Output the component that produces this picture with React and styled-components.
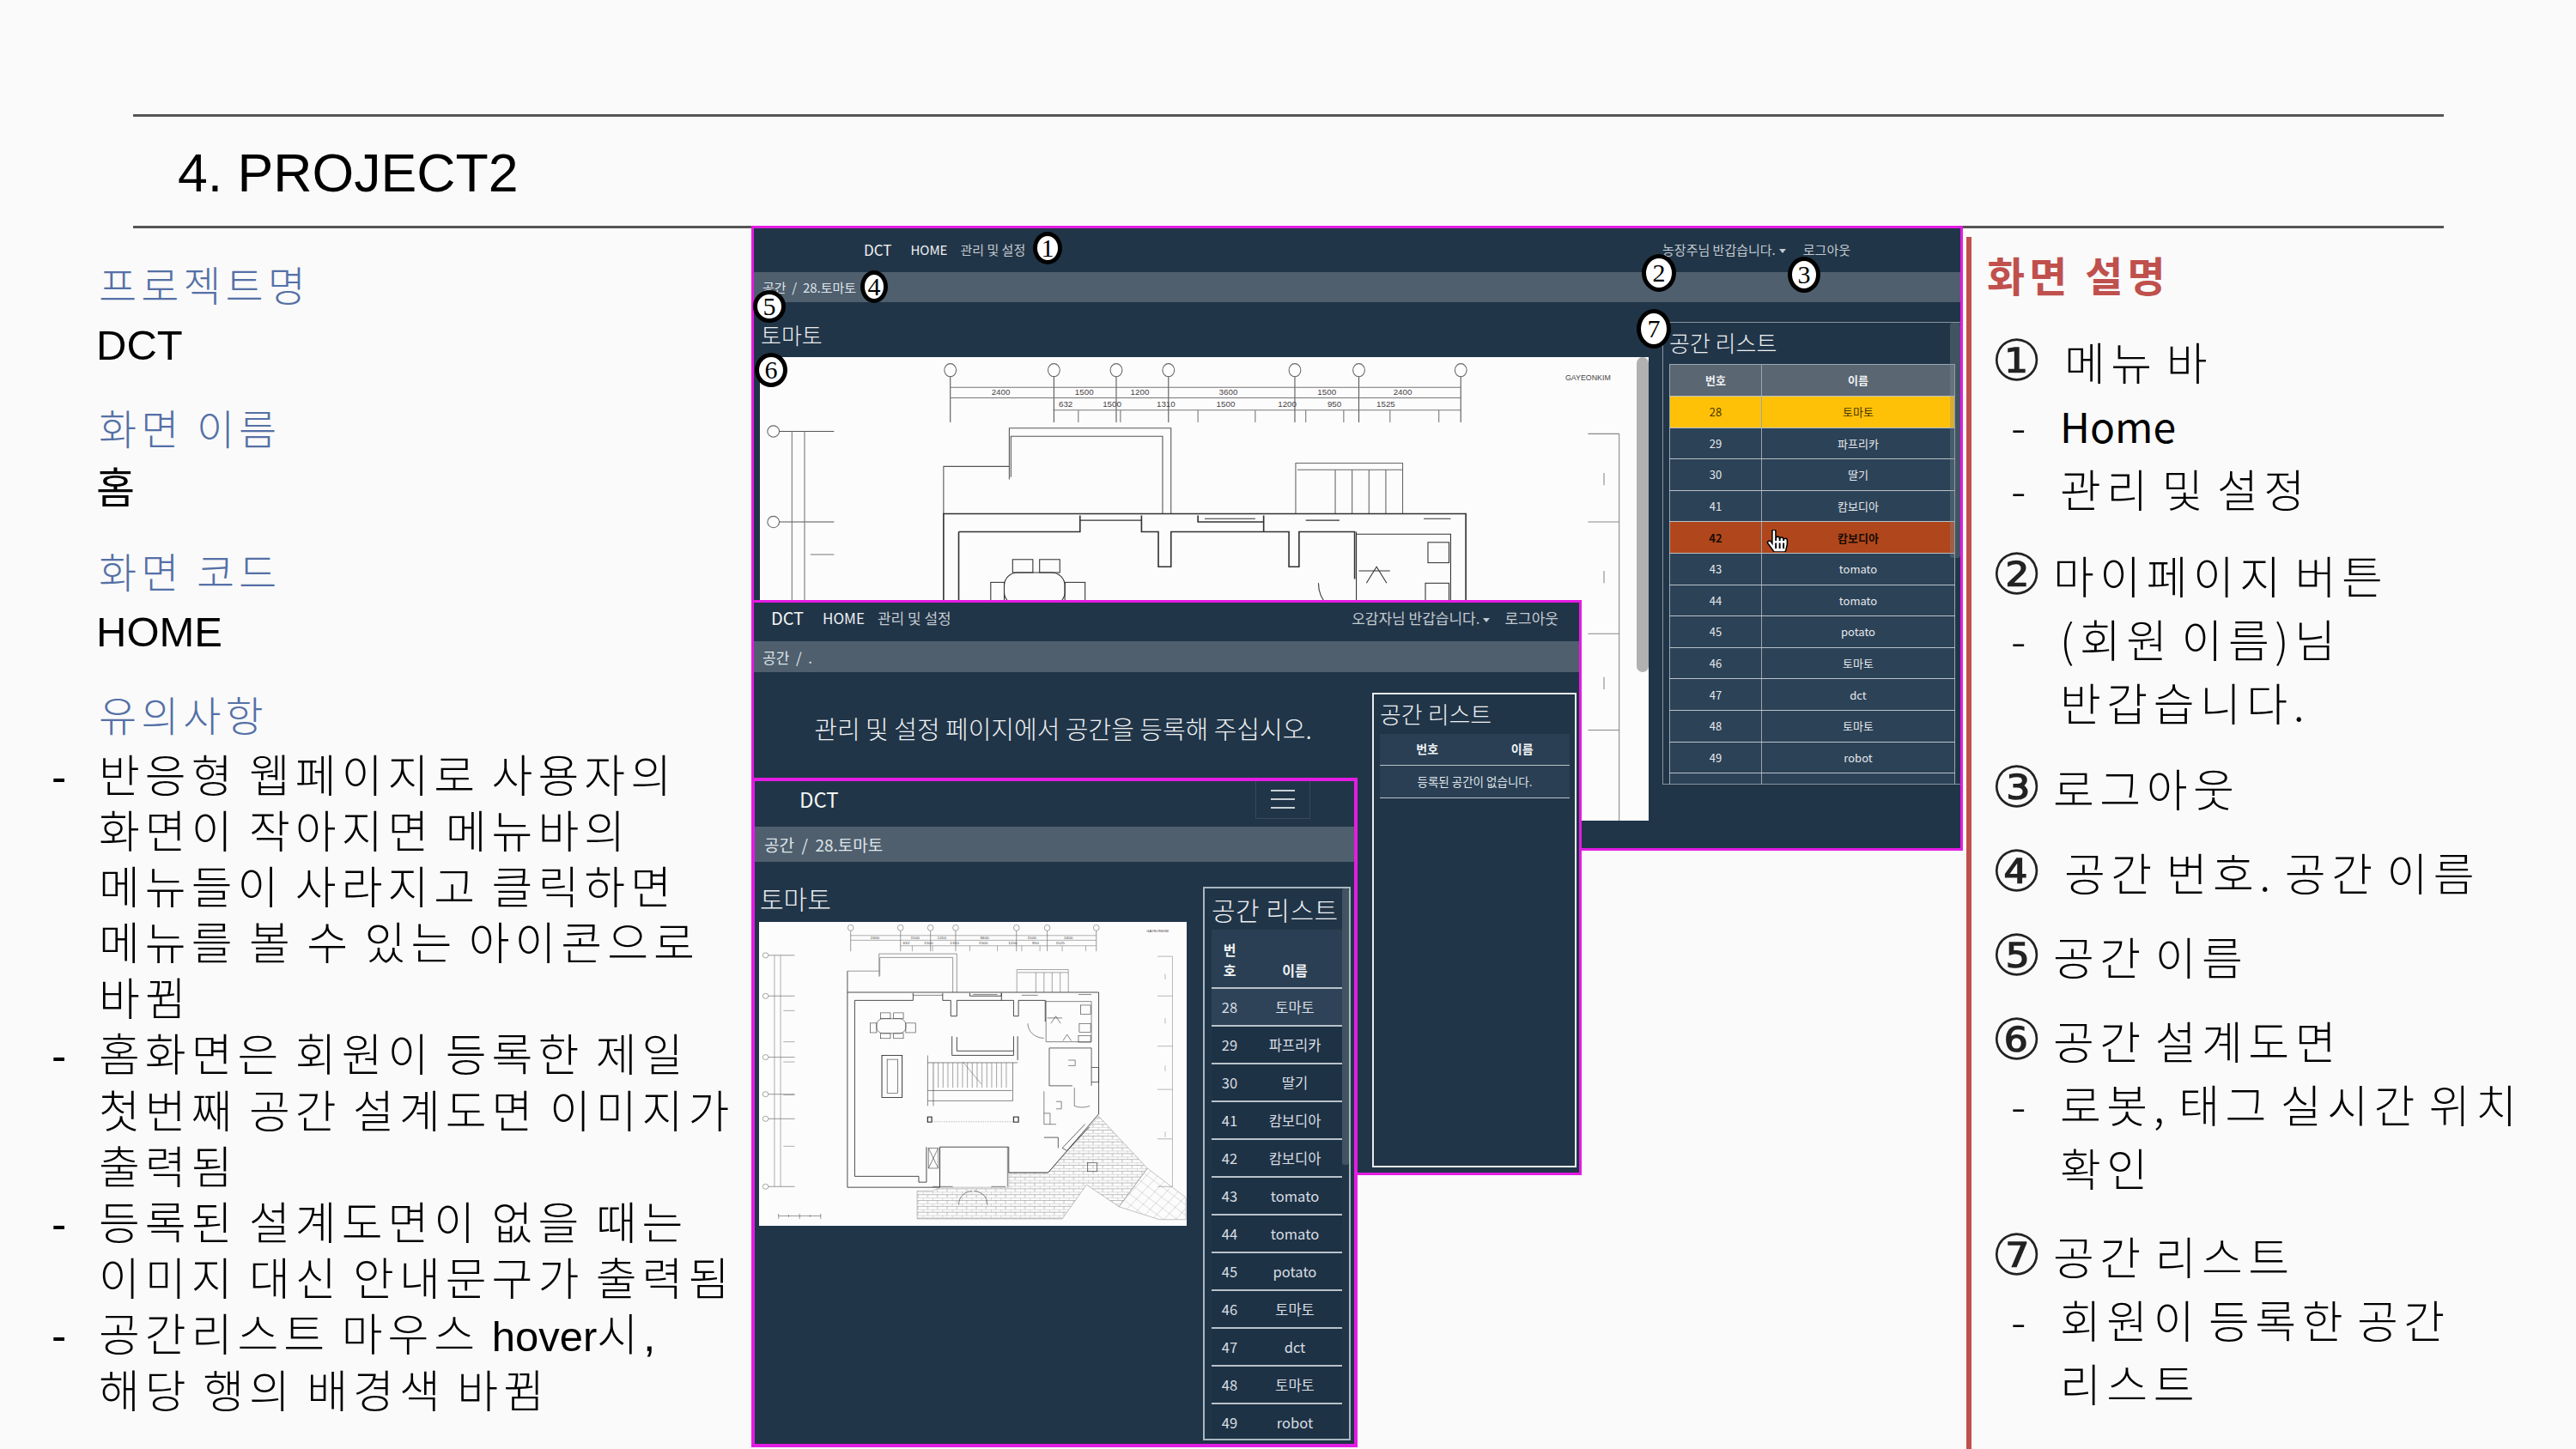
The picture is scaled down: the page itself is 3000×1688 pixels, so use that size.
import React from 'react';
import styled, { createGlobalStyle } from 'styled-components';
import { FaHandPointer } from 'react-icons/fa';

const KR = '"Noto Sans CJK KR", sans-serif';
const MIXED = '"Liberation Sans", "Noto Sans CJK KR", sans-serif';
const DARK = '#213548';
const CRUMB = '#4f5f6e';
const MAGENTA = '#e31ce3';

const GlobalStyle = createGlobalStyle`
  html, body { margin: 0; padding: 0; background: #fafafa; }
  * { box-sizing: border-box; }
`;

const Slide = styled.div`
  position: relative;
  width: 3000px;
  height: 1688px;
  overflow: hidden;
  background: #fafafa;
  color: #000;
`;
const Header = styled.header`
  margin: 133px 154px 0 155px;
  height: 133px;
  border-top: 3px solid #555;
  border-bottom: 3px solid #555;
  display: flex;
  align-items: center;
  padding: 3px 0 0 52px;
  font: 400 62.6px ${MIXED};
`;
const Body = styled.div`
  display: grid;
  grid-template-columns: 875px 1415px 1fr;
  height: 1422px;
`;

/* left column */
const Summary = styled.section`
  padding: 31px 0 0 115px;
  position: relative;
`;
const Label = styled.div`
  font: 300 48px/66px ${KR};
  letter-spacing: 5px;
  color: #5470a6;
  white-space: nowrap;
`;
const Value = styled.div`
  font: 400 49px/72px ${MIXED};
  margin: 3px 0 26px -3px;
`;
const Notes = styled.ul`
  list-style: none;
  margin: 9px 0 0 -55px;
  padding: 0;
`;
const Note = styled.li`
  display: grid;
  grid-template-columns: 55px 1fr;
  font: 300 52px/65.1px ${MIXED};
  letter-spacing: 6px;
  word-spacing: -7px;
  white-space: nowrap;
`;
const Line = styled.div``;
const Plain = styled.span`
  letter-spacing: 0;
  font-size: 49px;
`;

/* right column */
const Explain = styled.aside`
  margin: 10px 0 0 0;
  border-left: 6px solid #c0504d;
  padding: 7px 0 0 18px;
  height: 1412px;
  overflow: hidden;
`;
const ExplainTitle = styled.h2`
  margin: 0 0 29px;
  font: 700 48px/72px ${KR};
  letter-spacing: 5px;
  color: #c0504d;
`;
const Group = styled.div`
  margin: 0 0 ${p => p.$gap || 24}px 8px;
  font-family: ${KR};
`;
const Heading = styled.div`
  display: flex;
  align-items: center;
  font-weight: 300;
  font-size: 52px;
  line-height: 74px;
  letter-spacing: 6.5px;
  word-spacing: -8px;
  white-space: nowrap;
`;
const Circled = styled.span`
  display: inline-block;
  width: ${p => p.$wide ? 85 : 72}px;
  font-family: "DejaVu Sans", sans-serif;
  font-weight: 200;
  font-size: 66px;
  line-height: 70px;
  letter-spacing: 0;
  margin-left: -3px;
  color: #222;
`;
const SubItem = styled.div`
  display: grid;
  grid-template-columns: 77px 1fr;
  font-weight: 300;
  font-size: 52px;
  line-height: 74px;
  letter-spacing: 6.5px;
  word-spacing: -8px;
  white-space: nowrap;
`;
const SubDash = styled.span`
  padding-left: 20px;
`;
const SubLatin = styled.span`
  letter-spacing: 0;
  font-size: 48px;
  font-weight: 400;
`;

/* the overlapped screenshots */
const Canvas = styled.div`
  position: relative;
`;
const Frame = styled.div`
  position: absolute;
  left: 0;
  top: ${p => p.$top}px;
  width: ${p => p.$width}px;
  height: ${p => p.$height}px;
  border: ${p => p.$border}px solid ${MAGENTA};
  background: ${DARK};
  display: flex;
  flex-direction: column;
  overflow: hidden;
  color: #dfe4e8;
  font-family: ${KR};
`;
const NavBar = styled.nav`
  height: ${p => p.$height}px;
  flex: none;
  display: flex;
  align-items: center;
  padding: 0 0 ${p => p.$lift || 0}px ${p => p.$pad}px;
  font-size: ${p => p.$size}px;
  color: #c3cad0;
`;
const Brand = styled.span`
  font-size: ${p => p.$size}px;
  color: #f2f4f5;
  margin-right: ${p => p.$gap}px;
`;
const NavLink = styled.span`
  margin-right: ${p => p.$gap}px;
  color: ${p => p.$active ? '#eef1f3' : '#c3cad0'};
`;
const NavRight = styled.div`
  margin-left: auto;
  margin-right: ${p => p.$right}px;
  display: flex;
  align-items: center;
  gap: ${p => p.$gap}px;
`;
const Caret = styled.i`
  display: inline-block;
  margin-left: 4px;
  vertical-align: middle;
  border-top: 5px solid #c3cad0;
  border-left: 4px solid transparent;
  border-right: 4px solid transparent;
`;
const Toggler = styled.div`
  margin-left: auto;
  margin-right: 51px;
  width: 64px;
  height: 46px;
  border: 1px solid rgba(255, 255, 255, 0.1);
  display: flex;
  align-items: center;
  justify-content: center;
`;
const Crumb = styled.div`
  height: ${p => p.$height}px;
  flex: none;
  background: ${CRUMB};
  display: flex;
  align-items: center;
  padding-left: ${p => p.$pad}px;
  font-size: ${p => p.$size}px;
  color: #dfe4e8;
`;
const Columns = styled.div`
  flex: 1;
  min-height: 0;
  display: grid;
  grid-template-columns: ${p => p.$cols};
  column-gap: ${p => p.$gap}px;
  padding: ${p => p.$padding};
`;
const Main = styled.div`
  min-width: 0;
  display: flex;
  flex-direction: column;
`;
const SpaceName = styled.div`
  font-size: ${p => p.$size}px;
  line-height: ${p => p.$line}px;
  height: 41px;
  padding-left: 1px;
  font-weight: 300;
  color: #e8ecef;
`;
const Paper = styled.div`
  position: relative;
  width: ${p => p.$width}px;
  height: ${p => p.$height}px;
  background: #fdfcfd;
  overflow: hidden;
`;
const ImageScroll = styled.div`
  position: absolute;
  top: 0;
  right: 0;
  width: 14px;
  height: 367px;
  background: #b1b1b1;
  border-radius: 7px;
`;
const Message = styled.div`
  height: 82px;
  display: flex;
  align-items: center;
  justify-content: center;
  font-size: 29px;
  font-weight: 300;
  color: #eef1f3;
  white-space: nowrap;
`;
const Panel = styled.div`
  position: relative;
  height: ${p => p.$height}px;
  padding: ${p => p.$padding};
  border: ${p => p.$line}px solid ${p => p.$color};
  border-right-width: ${p => p.$open ? 0 : p.$line}px;
  overflow: hidden;
`;
const PanelTitle = styled.h3`
  margin: 0 0 ${p => p.$after || 0}px;
  font-weight: 300;
  font-size: ${p => p.$size}px;
  line-height: ${p => p.$line}px;
  letter-spacing: ${p => p.$spacing || 0}px;
  white-space: nowrap;
  color: #eef1f3;
`;
const PanelScroll = styled.div`
  position: absolute;
  top: 0;
  right: 0;
  width: ${p => p.$width}px;
  height: ${p => p.$height}px;
  background: rgba(130, 140, 150, 0.35);
  border-radius: 3px;
`;
const Table = styled.table`
  width: ${p => p.$width}px;
  table-layout: fixed;
  border-collapse: collapse;
  text-align: center;
`;
const HeadCell = styled.th`
  width: ${p => p.$width ? `${p.$width}px` : 'auto'};
  height: ${p => p.$height}px;
  padding: 0 0 ${p => p.$padBottom || 0}px;
  font-size: ${p => p.$size}px;
  line-height: 1.5;
  font-weight: 700;
  vertical-align: ${p => p.$bottom ? 'bottom' : 'middle'};
  background: ${p => p.$bg};
  color: #eef1f3;
  border: ${p => p.$grid ? '1px solid #9aa5af' : '0'};
  border-bottom: ${p => p.$rule}px solid #b9c2c9;
`;
const Cell = styled.td`
  height: ${p => p.$height}px;
  padding: 0;
  font-size: ${p => p.$size}px;
  font-weight: ${p => p.$strong ? 700 : 400};
  background: ${p => p.$bg};
  color: ${p => p.$fg};
  border: ${p => p.$grid ? '1px solid #9aa5af' : '0'};
  border-bottom: ${p => p.$rule}px solid #b9c2c9;
`;
const Badge = styled.div`
  position: absolute;
  left: ${p => p.$x}px;
  top: ${p => p.$y}px;
  width: ${p => p.$w}px;
  height: ${p => p.$h}px;
  transform: translate(-50%, -50%);
  border: 5px solid #000;
  border-radius: 50%;
  background: #fff;
  color: #000;
  display: flex;
  align-items: center;
  justify-content: center;
  font: 400 30px "Liberation Serif", serif;
  z-index: 5;
`;
const Pointer = styled.div`
  position: absolute;
  left: 1179px;
  top: 351px;
  z-index: 1;
  line-height: 0;
`;

const ROWS = [
  [28, '토마토'], [29, '파프리카'], [30, '딸기'], [41, '캄보디아'], [42, '캄보디아'], [43, 'tomato'],
  [44, 'tomato'], [45, 'potato'], [46, '토마토'], [47, 'dct'], [48, '토마토'], [49, 'robot'],
];

const BUBBLES_X = [278, 401, 475, 537, 687, 763, 884];
const BUBBLES_Y = [219, 330, 497, 598, 665, 850];
const DIMS = [
  [338, 174, '2400'], [437, 174, '1500'], [503, 174, '1200'], [608, 174, '3600'], [725, 174, '1500'], [815, 174, '2400'],
  [415, 189, '632'], [470, 189, '1500'], [534, 189, '1310'], [605, 189, '1500'], [678, 189, '1200'], [734, 189, '950'], [795, 189, '1525'],
];

// floor plan traced by hand, coordinates are shared by both crops
const FloorPlan = ({ id, height, weight }) => (
  <svg width="100%" height="100%" viewBox={`52 128 1055 ${height}`} preserveAspectRatio="none">
    <defs>
      <pattern id={`${id}-brick`} width="24" height="16" patternUnits="userSpaceOnUse">
        <path d="M0 0H24M0 8H24M0 0V8M12 8V16" fill="none" stroke="#777" strokeWidth="1" />
      </pattern>
      <pattern id={`${id}-tile`} width="22" height="22" patternUnits="userSpaceOnUse" patternTransform="rotate(40)">
        <path d="M0 0H22M0 0V22" fill="none" stroke="#888" strokeWidth="1" />
      </pattern>
    </defs>
    <g fill="none" stroke="#333" strokeWidth={weight}>
      <polygon points="442,862 480,862 498,852 668,852 668,812 765,812 890,658 1010,800 940,905 860,845 800,938 442,938" fill={`url(#${id}-brick)`} stroke="#999" />
      <polygon points="1010,800 1105,880 1105,940 1040,940 940,905" fill={`url(#${id}-tile)`} stroke="#999" />
      {BUBBLES_X.map(x => (
        <g key={x}>
          <ellipse cx={x} cy={144} rx="7" ry="8" fill="#fff" stroke="#666" />
          <path d={`M${x} 152V208`} stroke="#555" />
        </g>
      ))}
      {BUBBLES_Y.map(y => (
        <g key={y}>
          <ellipse cx={68} cy={y} rx="7" ry="7" fill="#fff" stroke="#666" />
          <path d={`M75 ${y}H140`} stroke="#555" />
        </g>
      ))}
      <path stroke="#777" d="M278 165H884M278 178H884M400 193H884M430 193V208M480 193V208M572 193V208M640 193V208M700 193V208M745 193V208M800 193V208M858 193V208" />
      <path stroke="#777" d="M90 219V850M105 219V850M112 370H140M112 455H140M112 510H140M112 600H140M112 740H140" />
      <path stroke="#888" d="M1072 222V850M1035 222H1072M1035 330H1072M1035 467H1072M1035 585H1072M1035 720H1072M1035 850H1072M1054 270V285M1054 390V405M1054 520V535M1054 700V715" />
      <path stroke="#555" d="M270 320V262H348V215H540V320M348 262V278M350 275V225H530V320M270 262V320" />
      <path stroke="#666" d="M688 320V258H815V320M690 266H815M735 266V320M755 266V320M775 266V320M795 266V320" />
      <path strokeWidth={weight * 1.5} d="M270 320H890V652L765 812H668V742H498V852H270Z" />
      <path strokeWidth={weight * 1.5} d="M288 342V822H446V838H465V742M288 342H432V322M505 322V342H525V385H540V342H680V385H692V342H758V400M572 322V330H650V322M650 322V342" />
      <path d="M432 328H505M580 326H640M700 328H740M840 326H872" />
      <path d="M760 342V455H872V345H760M763 390H800M715 405A40 40 0 0 0 755 445M772 405L784 385L796 405M802 452L812 435L822 452" />
      <rect x="845" y="355" width="25" height="25" />
      <rect x="842" y="405" width="28" height="24" />
      <rect x="840" y="438" width="30" height="18" />
      <rect x="342" y="392" width="72" height="40" rx="16" />
      <rect x="352" y="376" width="24" height="16" />
      <rect x="384" y="376" width="24" height="16" />
      <rect x="352" y="432" width="24" height="14" />
      <rect x="384" y="432" width="24" height="14" />
      <rect x="326" y="404" width="16" height="26" />
      <rect x="414" y="404" width="24" height="26" />
      <rect x="355" y="492" width="50" height="115" strokeWidth={weight * 1.6} />
      <rect x="368" y="503" width="26" height="92" />
      <path strokeWidth={weight * 1.5} d="M528 440V492H680V440M540 442V480H680M690 440V505" />
      <path d="M468 492V512H690M468 512V630M468 588H676M468 616H678V512M482 512V630" />
      <path stroke="#666" d="M494 512V580M506 512V580M518 512V580M530 512V580M542 512V580M554 512V580M566 512V580M578 512V580M590 512V580M602 512V580M614 512V580M626 512V580M638 512V580M650 512V580M662 512V580M555 510L600 570" />
      <rect x="468" y="660" width="10" height="14" strokeWidth={weight * 2} />
      <rect x="680" y="660" width="12" height="14" strokeWidth={weight * 2} />
      <path stroke="#888" strokeDasharray="3 3" d="M478 673H680" />
      <path strokeWidth={weight * 1.3} d="M768 472H872V575M768 472V575H825M872 525H890V565H872" />
      <path d="M830 580V630A50 50 0 0 0 868 630M755 590V680H785M755 650H770V680M785 618H798V638H785M815 505H832V520H815" />
      <path strokeWidth={weight * 1.3} d="M856 680L800 745L812 752L866 688M755 716H790V745" />
      <path d="M470 745H494V800H470ZM470 745L494 800M494 745L470 800M498 742V850M665 742V850" />
      <path d="M545 900A35 35 0 0 1 578 862M615 900A35 35 0 0 0 582 862M480 850H530M625 850H660" />
      <rect x="862" y="785" width="24" height="24" />
      <path stroke="#555" d="M100 930H205M100 924V938M125 927V933M152 924V938M178 927V933M204 924V938" />
    </g>
    <g fontFamily='"Liberation Sans", sans-serif' fill="#444" textAnchor="middle">
      {DIMS.map(([x, y, t]) => (
        <text key={`${x}-${y}`} x={x} y={y} fontSize="10">{t}</text>
      ))}
      <text x="1035" y="156" fontSize="9">GAYEONKIM</text>
    </g>
  </svg>
);

const Burger = () => (
  <svg width="30" height="24" viewBox="0 0 30 24">
    <path d="M1 2H29M1 12H29M1 22H29" stroke="#c9d0d6" strokeWidth="2" />
  </svg>
);

const DefaultDetail = () => (
  <Summary>
    <Label>프로젝트명</Label>
    <Value>DCT</Value>
    <Label>화면 이름</Label>
    <Value>홈</Value>
    <Label>화면 코드</Label>
    <Value>HOME</Value>
    <Label>유의사항</Label>
    <Notes>
      <Note><span>-</span><div><Line>반응형 웹페이지로 사용자의</Line><Line>화면이 작아지면 메뉴바의</Line><Line>메뉴들이 사라지고 클릭하면</Line><Line>메뉴를 볼 수 있는 아이콘으로</Line><Line>바뀜</Line></div></Note>
      <Note><span>-</span><div><Line>홈화면은 회원이 등록한 제일</Line><Line>첫번째 공간 설계도면 이미지가</Line><Line>출력됨</Line></div></Note>
      <Note><span>-</span><div><Line>등록된 설계도면이 없을 때는</Line><Line>이미지 대신 안내문구가 출력됨</Line></div></Note>
      <Note><span>-</span><div><Line>공간리스트 마우스 <Plain>hover</Plain>시,</Line><Line>해당 행의 배경색 바뀜</Line></div></Note>
    </Notes>
  </Summary>
);

const WideTable = () => (
  <Table $width={333}>
    <thead>
      <tr>
        <HeadCell $width={107} $height={37} $size={13} $bg="#5a6672" $grid $rule={1}>번호</HeadCell>
        <HeadCell $height={37} $size={13} $bg="#5a6672" $grid $rule={1}>이름</HeadCell>
      </tr>
    </thead>
    <tbody>
      {ROWS.concat([[50, '']]).map(([no, name]) => {
        const bg = no === 28 ? '#ffc107' : no === 42 ? '#b0471c' : '#2c4257';
        const fg = no === 28 ? '#4a3500' : no === 42 ? '#1a0c04' : '#e4e8eb';
        return (
          <tr key={no}>
            <Cell $height={36.6} $size={13} $bg={bg} $fg={fg} $grid $rule={1} $strong={no === 42}>{no === 50 ? '' : no}</Cell>
            <Cell $height={36.6} $size={13} $bg={bg} $fg={fg} $grid $rule={1} $strong={no === 42}>{name}</Cell>
          </tr>
        );
      })}
    </tbody>
  </Table>
);

const ProjectPage = () => (
  <Frame $top={-3} $width={1411} $height={728} $border={3}>
    <NavBar $height={51} $pad={128} $lift={2} $size={15}>
      <Brand $size={17} $gap={22}>DCT</Brand>
      <NavLink $gap={15} $active>HOME</NavLink>
      <NavLink $gap={0}>관리 및 설정</NavLink>
      <NavRight $right={128} $gap={20}>
        <span>농장주님 반갑습니다.<Caret /></span>
        <span>로그아웃</span>
      </NavRight>
    </NavBar>
    <Crumb $height={35} $pad={10} $size={15}>공간&nbsp;&nbsp;/&nbsp;&nbsp;28.토마토</Crumb>
    <Columns $cols="1035px 1fr" $gap={16} $padding="23px 0 0 7px">
      <Main>
        <SpaceName $size={26} $line={29}>토마토</SpaceName>
        <Paper $width={1035} $height={540}>
          <FloorPlan id="wide" height={568} weight={1.1} />
          <ImageScroll />
        </Paper>
      </Main>
      <Panel $height={539} $padding="0 0 0 7px" $line={1} $color="#8694a0" $open>
        <PanelTitle $size={26} $line={46} $after={2}>공간 리스트</PanelTitle>
        <WideTable />
        <PanelScroll $width={12} $height={274} />
      </Panel>
    </Columns>
    <Pointer><FaHandPointer size={26} color="#fff" stroke="#000" strokeWidth={30} /></Pointer>
  </Frame>
);

const EmptyPage = () => (
  <Frame $top={433} $width={967} $height={670} $border={3}>
    <NavBar $height={45} $pad={20} $lift={10} $size={17}>
      <Brand $size={20} $gap={22}>DCT</Brand>
      <NavLink $gap={15} $active>HOME</NavLink>
      <NavLink $gap={0}>관리 및 설정</NavLink>
      <NavRight $right={24} $gap={17}>
        <span>오감자님 반갑습니다.<Caret /></span>
        <span>로그아웃</span>
      </NavRight>
    </NavBar>
    <Crumb $height={36} $pad={10} $size={17}>공간&nbsp;&nbsp;/&nbsp;&nbsp;.</Crumb>
    <Columns $cols="1fr 238px" $gap={0} $padding="24px 3px 0 0">
      <Main><Message>관리 및 설정 페이지에서 공간을 등록해 주십시오.</Message></Main>
      <Panel $height={553} $padding="0 7px" $line={2} $color="#e8ecef">
        <PanelTitle $size={27} $line={46}>공간 리스트</PanelTitle>
        <Table $width={221}>
          <thead>
            <tr>
              <HeadCell $height={36} $size={14} $bg="#2a3f54" $rule={1}>번호</HeadCell>
              <HeadCell $height={36} $size={14} $bg="#2a3f54" $rule={1}>이름</HeadCell>
            </tr>
          </thead>
          <tbody>
            <tr>
              <Cell colSpan={2} $height={38} $size={13.5} $bg="#2a3f54" $fg="#dfe4e8" $rule={1}>등록된 공간이 없습니다.</Cell>
            </tr>
          </tbody>
        </Table>
      </Panel>
    </Columns>
  </Frame>
);

const MobilePage = () => (
  <Frame $top={640} $width={706} $height={780} $border={4}>
    <NavBar $height={53} $pad={52} $lift={12} $size={24}>
      <Brand $size={24} $gap={0}>DCT</Brand>
      <Toggler><Burger /></Toggler>
    </NavBar>
    <Crumb $height={41} $pad={11} $size={19}>공간&nbsp;&nbsp;/&nbsp;&nbsp;28.토마토</Crumb>
    <Columns $cols="498px 172px" $gap={19} $padding="29px 0 0 5px">
      <Main>
        <SpaceName $size={30} $line={27}>토마토</SpaceName>
        <Paper $width={498} $height={354}>
          <FloorPlan id="full" height={829} weight={1.3} />
        </Paper>
      </Main>
      <Panel $height={645} $padding="0 8px 0 8px" $line={2} $color="#a9b7c1">
        <PanelTitle $size={30} $line={48} $spacing={0.5}>공간 리스트</PanelTitle>
        <Table $width={152}>
          <thead>
            <tr>
              <HeadCell $width={42} $height={68} $size={16} $bg="#2a3f54" $rule={2} $bottom $padBottom={8}>번<br />호</HeadCell>
              <HeadCell $height={68} $size={16} $bg="#2a3f54" $rule={2} $bottom $padBottom={8}>이름</HeadCell>
            </tr>
          </thead>
          <tbody>
            {ROWS.map(([no, name]) => {
              const bg = no === 28 ? '#2e4358' : '#1e3245';
              return (
                <tr key={no}>
                  <Cell $height={44} $size={16.5} $bg={bg} $fg="#d8dee3" $rule={2}>{no}</Cell>
                  <Cell $height={44} $size={16.5} $bg={bg} $fg="#d8dee3" $rule={2}>{name}</Cell>
                </tr>
              );
            })}
          </tbody>
        </Table>
        <PanelScroll $width={8} $height={322} />
      </Panel>
    </Columns>
  </Frame>
);

const Explanation = () => (
  <Explain>
    <ExplainTitle>화면 설명</ExplainTitle>
    <Group $gap={27}>
      <Heading><Circled $wide>①</Circled>메뉴 바</Heading>
      <SubItem><SubDash>-</SubDash><SubLatin>Home</SubLatin></SubItem>
      <SubItem><SubDash>-</SubDash><span>관리 및 설정</span></SubItem>
    </Group>
    <Group $gap={26}>
      <Heading><Circled>②</Circled>마이페이지 버튼</Heading>
      <SubItem><SubDash>-</SubDash><span>(회원 이름)님</span></SubItem>
      <SubItem><span /><span>반갑습니다.</span></SubItem>
    </Group>
    <Group><Heading><Circled>③</Circled>로그아웃</Heading></Group>
    <Group><Heading><Circled $wide>④</Circled>공간 번호. 공간 이름</Heading></Group>
    <Group><Heading><Circled>⑤</Circled>공간 이름</Heading></Group>
    <Group $gap={29}>
      <Heading><Circled>⑥</Circled>공간 설계도면</Heading>
      <SubItem><SubDash>-</SubDash><span>로봇, 태그 실시간 위치</span></SubItem>
      <SubItem><span /><span>확인</span></SubItem>
    </Group>
    <Group>
      <Heading><Circled>⑦</Circled>공간 리스트</Heading>
      <SubItem><SubDash>-</SubDash><span>회원이 등록한 공간</span></SubItem>
      <SubItem><span /><span>리스트</span></SubItem>
    </Group>
  </Explain>
);

const App = () => (
  <>
    <GlobalStyle />
    <Slide>
      <Header>4. PROJECT2</Header>
      <Body>
        <DefaultDetail />
        <Canvas>
          <ProjectPage />
          <EmptyPage />
          <MobilePage />
          <Badge $x={345} $y={23} $w={34} $h={38}>1</Badge>
          <Badge $x={143} $y={68} $w={32} $h={38}>4</Badge>
          <Badge $x={21} $y={91} $w={38} $h={38}>5</Badge>
          <Badge $x={23} $y={165} $w={38} $h={40}>6</Badge>
          <Badge $x={1057} $y={52} $w={40} $h={44}>2</Badge>
          <Badge $x={1226} $y={54} $w={38} $h={42}>3</Badge>
          <Badge $x={1051} $y={117} $w={40} $h={46}>7</Badge>
        </Canvas>
        <Explanation />
      </Body>
    </Slide>
  </>
);

export default App;
